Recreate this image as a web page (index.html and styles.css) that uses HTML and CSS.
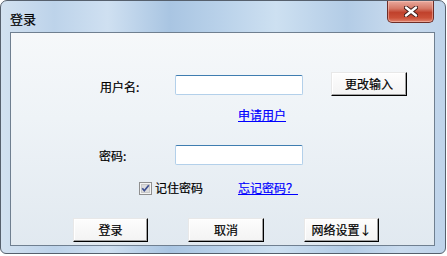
FILE: index.html
```html
<!DOCTYPE html>
<html lang="zh">
<head>
<meta charset="utf-8">
<title>登录</title>
<link rel="stylesheet" href="styles.css">
</head>
<body>
<div class="window">
  <div class="titlebar">
    <span class="title">登录</span>
    <div class="close">
      <svg width="14" height="11" viewBox="0 0 14 11">
        <path d="M2 1.5 L12 9.5 M12 1.5 L2 9.5" stroke="#3a1a17" stroke-width="4.2" stroke-linecap="round"/>
        <path d="M2 1.5 L12 9.5 M12 1.5 L2 9.5" stroke="#ffffff" stroke-width="2.4" stroke-linecap="round"/>
      </svg>
    </div>
  </div>
  <div class="client">
    <div class="row row-user">
      <span class="label">用户名:</span>
      <input class="field" type="text">
      <button class="btn btn-change">更改输入</button>
    </div>
    <div class="row row-apply">
      <a class="link" href="#">申请用户</a>
    </div>
    <div class="row row-pass">
      <span class="label">密码:</span>
      <input class="field" type="password">
    </div>
    <div class="row row-remember">
      <span class="checkbox">
        <svg width="13" height="13" viewBox="0 0 13 13">
          <rect x="0.5" y="0.5" width="12" height="12" fill="#f4f4f4" stroke="#8f8f8f"/>
          <rect x="2.5" y="2.5" width="8" height="8" fill="#dcdcdc" stroke="#c8c8c8"/>
          <path d="M3.3 6.3 L5.3 8.7 L9.8 3.2" fill="none" stroke="#3d4f91" stroke-width="1.7"/>
        </svg>
      </span>
      <span class="remember-text">记住密码</span>
      <a class="link" href="#">忘记密码？</a>
    </div>
    <div class="row row-buttons">
      <button class="btn btn-login">登录</button>
      <button class="btn btn-cancel">取消</button>
      <button class="btn btn-net">网络设置↓</button>
    </div>
  </div>
</div>
</body>
</html>
```
FILE: styles.css
```css
html, body {
  margin: 0;
  padding: 0;
  background: #ffffff;
}

body {
  width: 447px;
  height: 256px;
  overflow: hidden;
  font-family: "Noto Sans CJK SC", "Liberation Sans", sans-serif;
  font-size: 12px;
  color: #000;
  -webkit-text-stroke: 0.2px #000;
}

.window {
  box-sizing: border-box;
  width: 446px;
  height: 254px;
  border: 1px solid #56606d;
  border-radius: 7px 7px 6px 6px;
  background:
    linear-gradient(90deg,
      #d2e1f0 0%, #bdd3ea 12%, #cfe0f1 24%, #a9c5e2 38%,
      #bad2ea 50%, #cde0f1 62%, #b3cce6 78%, #c9dbee 90%, #bed3ea 100%);
  display: flex;
  flex-direction: column;
  overflow: hidden;
}

.titlebar {
  height: 31px;
  display: flex;
  align-items: flex-start;
  flex: none;
}

.title {
  margin-left: 9px;
  margin-top: 10px;
  font-size: 13px;
  line-height: 16px;
  color: #000;
}

.close {
  box-sizing: border-box;
  margin-left: auto;
  margin-right: 11px;
  width: 47px;
  height: 22px;
  border: 1px solid #6d2d27;
  border-top: none;
  border-radius: 0 0 5px 5px;
  background: linear-gradient(#e9a99d 0%, #d67a68 35%, #c0412c 55%, #cb5038 80%, #e0826d 100%);
  box-shadow: inset 0 0 0 1px rgba(255, 210, 200, 0.45);
  display: flex;
  align-items: center;
  justify-content: center;
  -webkit-text-stroke: 0;
}

.client {
  box-sizing: border-box;
  margin-left: 9px;
  width: 425px;
  height: 214px;
  border: 1px solid #6f7f90;
  background: linear-gradient(#f6f8fa 0%, #eef3f7 40%, #e1e9f0 100%);
  flex: none;
}

.row {
  display: flex;
  align-items: flex-start;
}

.row-user {
  margin-top: 39px;
  height: 24px;
}

.label {
  margin-left: 89px;
  width: 75px;
  line-height: 14px;
  flex: none;
}

.row-user .label {
  margin-top: 8px;
}

.field {
  box-sizing: border-box;
  width: 128px;
  height: 20px;
  margin: 0;
  padding: 0 3px;
  border: 1px solid #b3d0ea;
  border-top-color: #3f7db0;
  border-radius: 2px;
  background: #fff;
  font: inherit;
  outline: none;
  flex: none;
}

.row-user .field {
  margin-top: 3px;
}

.btn {
  box-sizing: border-box;
  height: 24px;
  margin: 0;
  padding: 0;
  border: 1px solid;
  border-color: #e8e8e8 #000 #000 #e8e8e8;
  box-shadow: inset -1px -1px 0 #a0a0a0, inset 1px 1px 0 #ffffff;
  background: linear-gradient(#fdfdfd, #f3f3f3);
  font: inherit;
  font-size: 12px;
  line-height: 20px;
  color: #000;
  flex: none;
}

.btn-change {
  margin-left: 28px;
  width: 76px;
}

.row-apply {
  margin-top: 12px;
  height: 14px;
}

.link {
  color: #0000ff;
  -webkit-text-stroke: 0.2px #0000ff;
  text-decoration: underline;
  line-height: 14px;
}

.row-apply .link {
  margin-left: 227px;
}

.row-pass {
  margin-top: 23px;
  height: 20px;
}

.row-pass .label {
  margin-left: 88px;
  width: 76px;
  margin-top: 4px;
}

.row-remember {
  margin-top: 15px;
  height: 16px;
}

.checkbox {
  margin-left: 128px;
  margin-top: 2px;
  width: 13px;
  height: 13px;
  display: flex;
  flex: none;
}

.remember-text {
  margin-left: 3px;
  width: 83px;
  line-height: 16px;
  flex: none;
}

.row-remember .link {
  line-height: 15px;
}

.row-buttons {
  margin-top: 22px;
  height: 24px;
}

.btn-login {
  margin-left: 62px;
  width: 75px;
}

.btn-cancel {
  margin-left: 40px;
  width: 76px;
}

.btn-net {
  margin-left: 40px;
  width: 75px;
}
```
